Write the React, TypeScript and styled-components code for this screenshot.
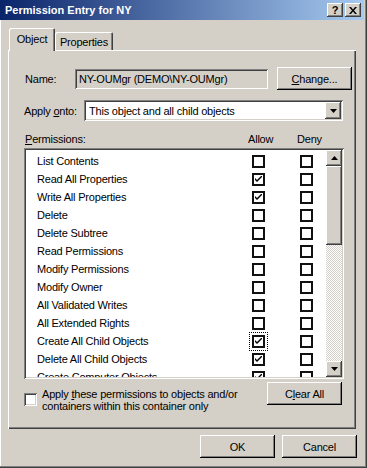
import React from "react";
import styled, { createGlobalStyle, css } from "styled-components";

const Global = createGlobalStyle`
  html, body { margin: 0; padding: 0; background: #d4d0c8; }
  body { font-family: "Liberation Sans", Arial, sans-serif; font-size: 11px; color: #000; letter-spacing: -0.2px; }
  * { box-sizing: border-box; }
`;

const raised = css`
  background: #d4d0c8;
  box-shadow: inset -1px -1px #404040, inset 1px 1px #fff, inset -2px -2px #808080, inset 2px 2px #d4d0c8;
`;
const sunken = css`
  box-shadow: inset 1px 1px #808080, inset -1px -1px #fff, inset 2px 2px #404040, inset -2px -2px #d4d0c8;
`;

const Window = styled.div`
  width: 367px;
  height: 468px;
  background: #d4d0c8;
  display: flex;
  flex-direction: column;
  padding: 0 3px 3px 0;
  box-shadow: inset -1px -1px #404040, inset -2px -2px #808080, inset 1px 0 #fff;
`;

const TitleBar = styled.div`
  height: 20px;
  display: flex;
  align-items: center;
  padding: 0 3px 0 5px;
  background: linear-gradient(to right, #0a246a, #a6caf0);
`;

const Title = styled.div`
  flex: 1;
  color: #fff;
  font-weight: bold;
  font-size: 11px;
  letter-spacing: 0;
`;

const TitleButtons = styled.div`
  display: flex;
  gap: 2px;
`;

const TitleButton = styled.div`
  ${raised};
  width: 16px;
  height: 14px;
  display: flex;
  align-items: center;
  justify-content: center;
  font-weight: bold;
  font-size: 11px;
  line-height: 1;
  color: #000;
`;

const TabStrip = styled.div`
  display: flex;
  align-items: flex-end;
  padding: 7px 0 0 9px;
  height: 30px;
`;

const Tab = styled.div<{ $active?: boolean }>`
  position: relative;
  background: #d4d0c8;
  border-top-left-radius: 2px;
  border-top-right-radius: 2px;
  box-shadow: inset 1px 1px #fff, inset -1px 0 #404040, inset -2px 0 #808080;
  display: flex;
  align-items: center;
  justify-content: center;
  ${(p) =>
    p.$active
      ? css`
          width: 46px;
          height: 23px;
          margin-bottom: -1px;
          z-index: 2;
          padding-bottom: 2px;
        `
      : css`
          width: 58px;
          height: 18px;
          padding-top: 1px;
        `}
`;

const Panel = styled.div`
  margin: 0 8px 0 8px;
  height: 379px;
  box-shadow: inset 1px 1px #fff, inset -1px -1px #404040, inset -2px -2px #808080;
  padding: 17px 14px 0 16px;
  display: flex;
  flex-direction: column;
`;

const NameRow = styled.div`
  display: grid;
  grid-template-columns: 42px 193px 75px;
  column-gap: 9px;
  align-items: center;
  height: 23px;
`;

const Label = styled.span`
  padding-left: 1px;
  white-space: nowrap;
`;

const NameField = styled.div`
  ${sunken};
  height: 20px;
  display: flex;
  align-items: center;
  padding-left: 4px;
  background: #d4d0c8;
  white-space: nowrap;
`;

const Button = styled.div<{ $w?: number }>`
  width: ${(p) => p.$w ?? 75}px;
  height: 23px;
  display: flex;
  align-items: center;
  justify-content: center;
  background: #d4d0c8;
  box-shadow: inset -1px -1px #000, inset 1px 1px #fff, inset -2px -2px #808080, inset 2px 2px #d4d0c8;
`;

const ApplyRow = styled.div`
  display: grid;
  grid-template-columns: 60px 259px;
  align-items: center;
  margin-top: 10px;
  height: 21px;
`;

const Combo = styled.div`
  ${sunken};
  background: #fff;
  height: 21px;
  display: flex;
  align-items: center;
  padding: 2px;
`;

const ComboText = styled.div`
  flex: 1;
  padding-left: 3px;
`;

const ArrowButton = styled.div`
  ${raised};
  width: 16px;
  height: 17px;
  display: flex;
  align-items: center;
  justify-content: center;
`;

const PermHeader = styled.div`
  display: grid;
  grid-template-columns: 224px 49px auto;
  margin-top: 10px;
  height: 15px;
  align-items: center;
`;

const ListBox = styled.div`
  ${sunken};
  background: #fff;
  width: 320px;
  height: 231px;
  margin-top: 2px;
  padding: 2px;
  display: flex;
`;

const ListBody = styled.div`
  flex: 1;
  overflow: hidden;
  padding-top: 2px;
`;

const PermRow = styled.div`
  display: grid;
  grid-template-columns: 215px 48px 13px;
  align-items: center;
  height: 18px;
  padding-left: 11px;
  white-space: nowrap;
`;

const Box = styled.div<{ $focus?: boolean }>`
  width: 13px;
  height: 13px;
  border: 2px solid #111;
  background: #fff;
  display: flex;
  align-items: center;
  justify-content: center;
  ${(p) =>
    p.$focus &&
    css`
      outline: 1px dotted #000;
      outline-offset: 2px;
    `}
`;

const ScrollBar = styled.div`
  width: 16px;
  display: flex;
  flex-direction: column;
  background: repeating-conic-gradient(#fff 0 25%, #d4d0c8 0 50%) 0 0 / 2px 2px;
`;

const ScrollButton = styled.div`
  ${raised};
  width: 16px;
  height: 16px;
  display: flex;
  align-items: center;
  justify-content: center;
`;

const Thumb = styled.div`
  ${raised};
  width: 16px;
  height: 79px;
`;

const Track = styled.div`
  flex: 1;
`;

const BottomRow = styled.div`
  display: flex;
  align-items: flex-start;
  margin-top: 3px;
`;

const ApplyCheck = styled.div`
  display: flex;
  align-items: flex-start;
  gap: 5px;
  flex: 1;
  padding-top: 11px;
`;

const ClassicBox = styled.div`
  ${sunken};
  width: 13px;
  height: 13px;
  background: #fff;
  flex: none;
`;

const ApplyText = styled.div`
  line-height: 12px;
  margin-top: -5px;
`;

const Footer = styled.div`
  display: flex;
  justify-content: flex-end;
  gap: 7px;
  padding: 6px 7px 0 0;
`;

const U = styled.span`
  text-decoration: underline;
`;

const Check = () => (
  <svg width="7" height="7" viewBox="0 0 7 7">
    <path d="M0 2 L0 4 L2 6 L7 1 L7 -1 L2 4 Z" fill="#000" />
  </svg>
);

const Tri = ({ up }: { up?: boolean }) => (
  <svg width="7" height="4" viewBox="0 0 7 4">
    {up ? <path d="M3.5 0 L7 4 L0 4 Z" fill="#000" /> : <path d="M0 0 L7 0 L3.5 4 Z" fill="#000" />}
  </svg>
);

const perms: [string, boolean, boolean, boolean?][] = [
  ["List Contents", false, false],
  ["Read All Properties", true, false],
  ["Write All Properties", true, false],
  ["Delete", false, false],
  ["Delete Subtree", false, false],
  ["Read Permissions", false, false],
  ["Modify Permissions", false, false],
  ["Modify Owner", false, false],
  ["All Validated Writes", false, false],
  ["All Extended Rights", false, false],
  ["Create All Child Objects", true, false, true],
  ["Delete All Child Objects", true, false],
  ["Create Computer Objects", true, false],
];

export default function App() {
  return (
    <>
      <Global />
      <Window>
        <TitleBar>
          <Title>Permission Entry for NY</Title>
          <TitleButtons>
            <TitleButton>?</TitleButton>
            <TitleButton>
              <svg width="8" height="7" viewBox="0 0 8 7">
                <path d="M0 0 L2 0 L4 2.5 L6 0 L8 0 L5 3.5 L8 7 L6 7 L4 4.5 L2 7 L0 7 L3 3.5 Z" fill="#000" />
              </svg>
            </TitleButton>
          </TitleButtons>
        </TitleBar>
        <TabStrip>
          <Tab $active>Object</Tab>
          <Tab>Properties</Tab>
        </TabStrip>
        <Panel>
          <NameRow>
            <Label>Name:</Label>
            <NameField>{"NY-OUMgr (DEMO\\NY-OUMgr)"}</NameField>
            <Button>
              <span>
                <U>C</U>hange...
              </span>
            </Button>
          </NameRow>
          <ApplyRow>
            <Label style={{ paddingLeft: 0 }}>
              Apply <U>o</U>nto:
            </Label>
            <Combo>
              <ComboText>This object and all child objects</ComboText>
              <ArrowButton>
                <Tri />
              </ArrowButton>
            </Combo>
          </ApplyRow>
          <PermHeader>
            <Label>
              <U>P</U>ermissions:
            </Label>
            <span>Allow</span>
            <span>Deny</span>
          </PermHeader>
          <ListBox>
            <ListBody>
              {perms.map(([name, allow, deny, focus]) => (
                <PermRow key={name}>
                  <span>{name}</span>
                  <Box $focus={focus}>{allow && <Check />}</Box>
                  <Box>{deny && <Check />}</Box>
                </PermRow>
              ))}
            </ListBody>
            <ScrollBar>
              <ScrollButton>
                <Tri up />
              </ScrollButton>
              <Thumb />
              <Track />
              <ScrollButton>
                <Tri />
              </ScrollButton>
            </ScrollBar>
          </ListBox>
          <BottomRow>
            <ApplyCheck>
              <ClassicBox />
              <ApplyText>
                Apply <U>t</U>hese permissions to objects and/or
                <br />
                containers within this container only
              </ApplyText>
            </ApplyCheck>
            <Button>
              <span>
                C<U>l</U>ear All
              </span>
            </Button>
          </BottomRow>
        </Panel>
        <Footer>
          <Button>OK</Button>
          <Button>Cancel</Button>
        </Footer>
      </Window>
    </>
  );
}
